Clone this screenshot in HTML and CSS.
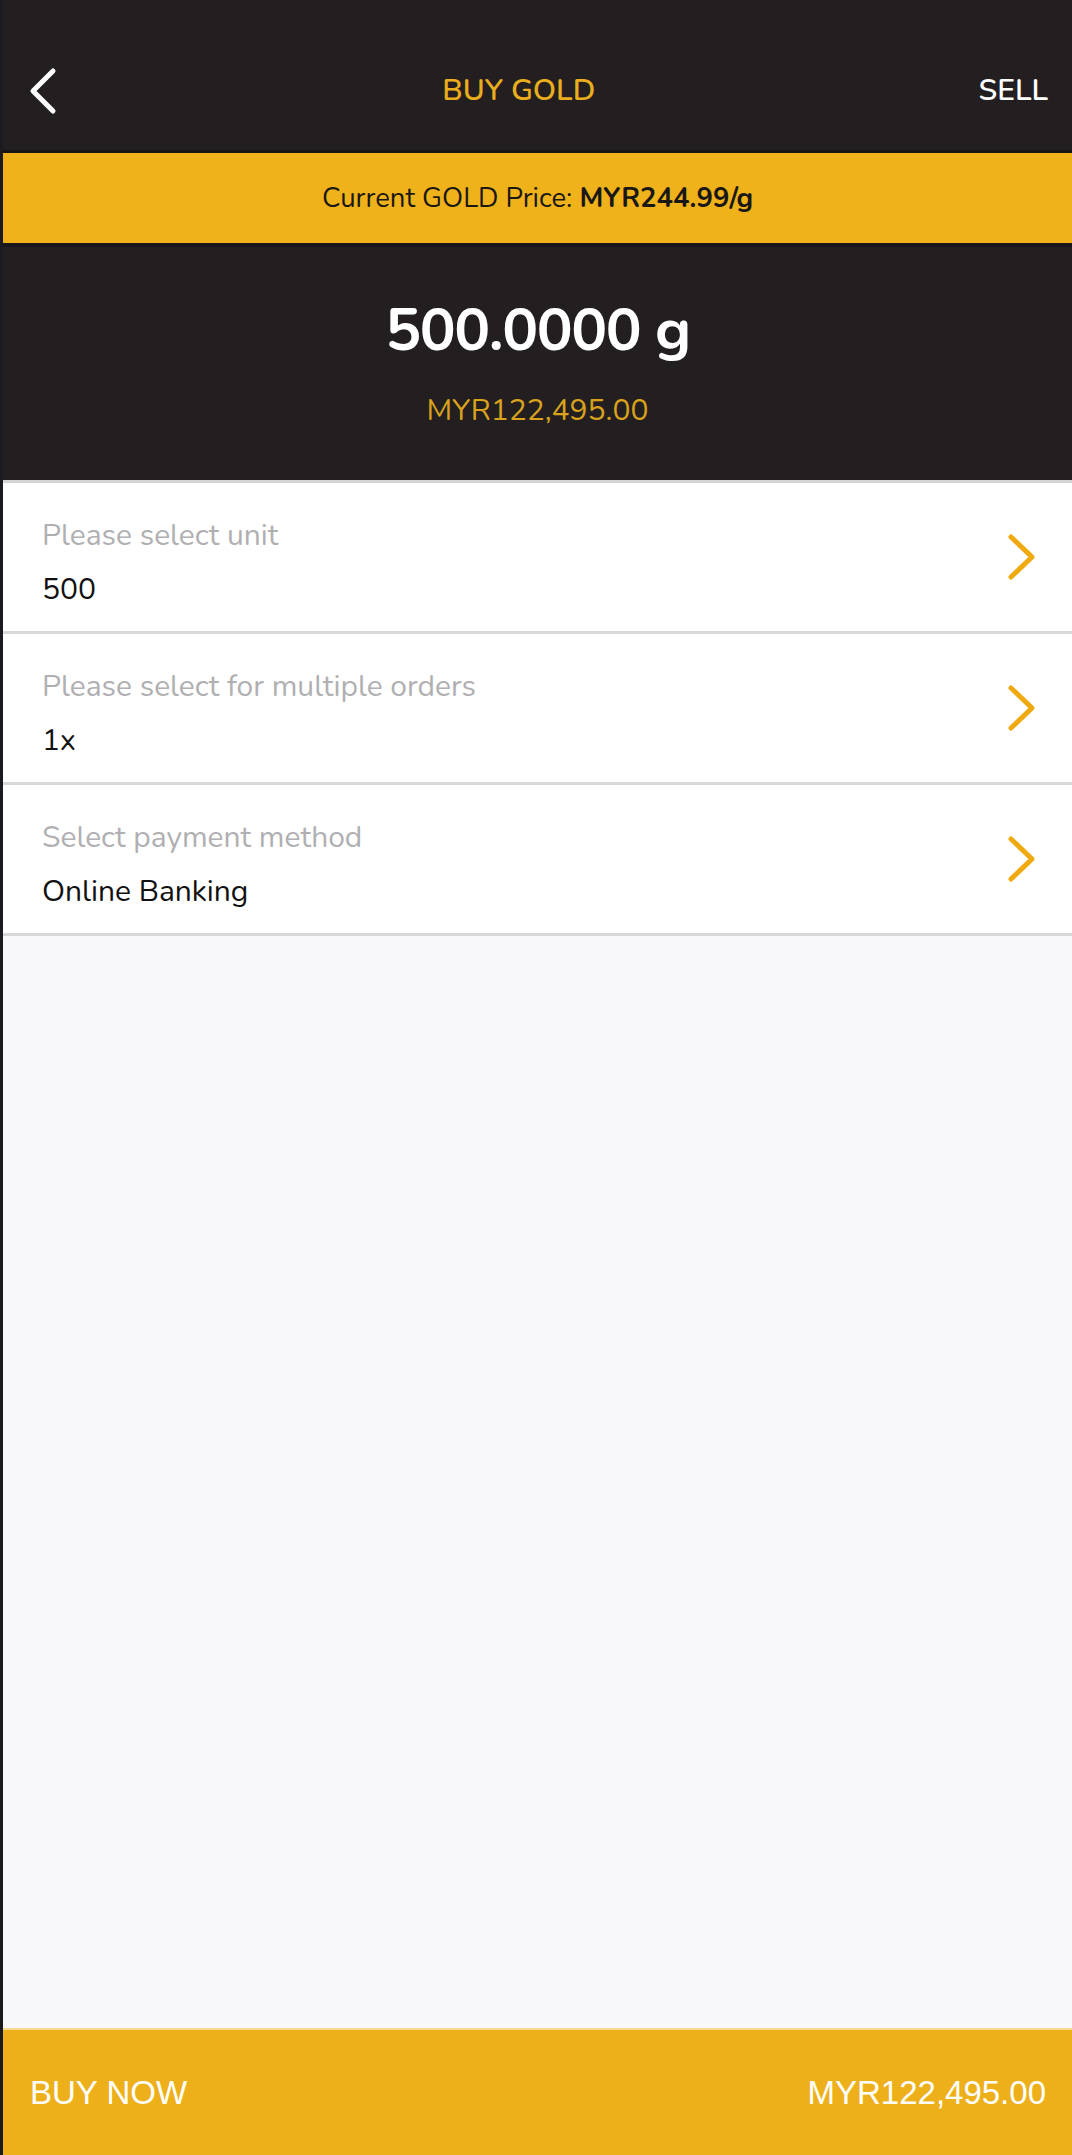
FILE: index.html
```html
<!DOCTYPE html>
<html lang="en">
<head>
<meta charset="utf-8">
<title>Buy Gold</title>
<link rel="stylesheet" href="styles.css">
</head>
<body>
<div class="app">
  <header class="topbar">
    <button class="back" aria-label="Back">
      <svg width="32" height="50" viewBox="0 0 32 50"><polyline points="26,5 6,25 26,45" fill="none" stroke="#ffffff" stroke-width="5" stroke-linecap="round" stroke-linejoin="round"/></svg>
    </button>
    <div class="title">BUY GOLD</div>
    <div class="sell">SELL</div>
  </header>
  <div class="priceband">Current GOLD Price: <b>MYR244.99/g</b></div>
  <section class="amount">
    <div class="grams">500.0000 g</div>
    <div class="myr">MYR122,495.00</div>
  </section>
  <div class="list">
    <div class="row">
      <div class="texts">
        <div class="label">Please select unit</div>
        <div class="value">500</div>
      </div>
      <svg class="chev" width="30" height="48" viewBox="0 0 30 48"><polyline points="4,4 25,24 4,44" fill="none" stroke="#f0a90f" stroke-width="5" stroke-linecap="round" stroke-linejoin="round"/></svg>
    </div>
    <div class="row">
      <div class="texts">
        <div class="label">Please select for multiple orders</div>
        <div class="value">1x</div>
      </div>
      <svg class="chev" width="30" height="48" viewBox="0 0 30 48"><polyline points="4,4 25,24 4,44" fill="none" stroke="#f0a90f" stroke-width="5" stroke-linecap="round" stroke-linejoin="round"/></svg>
    </div>
    <div class="row">
      <div class="texts">
        <div class="label">Select payment method</div>
        <div class="value">Online Banking</div>
      </div>
      <svg class="chev" width="30" height="48" viewBox="0 0 30 48"><polyline points="4,4 25,24 4,44" fill="none" stroke="#f0a90f" stroke-width="5" stroke-linecap="round" stroke-linejoin="round"/></svg>
    </div>
  </div>
  <div class="filler"></div>
  <footer class="buybar">
    <span class="buy">BUY NOW</span>
    <span class="total">MYR122,495.00</span>
  </footer>
</div>
</body>
</html>
```
FILE: styles.css
```css
* { box-sizing: border-box; }
html, body { margin: 0; padding: 0; }
body {
  width: 1072px;
  height: 2155px;
  font-family: "Nunito", "Open Sans", "Noto Sans", sans-serif;
  background: #f8f8fa;
  overflow: hidden;
}
.app {
  display: flex;
  flex-direction: column;
  height: 2155px;
  border-left: 3px solid #1c1a1e;
}
.topbar {
  height: 153px;
  background: #231f20;
  border-bottom: 3px solid #161418;
  display: flex;
  align-items: center;
  padding: 32px 24px 0 24px;
}
.back {
  background: none;
  border: 0;
  padding: 0;
  width: 32px;
  height: 50px;
  display: flex;
  cursor: pointer;
}
.title {
  flex: 1;
  text-align: center;
  color: #e9ad1d;
  font-size: 30px;
  font-weight: 600;
  line-height: 30px;
}
.sell {
  color: #ffffff;
  font-size: 30px;
  font-weight: 600;
  line-height: 30px;
}
.priceband {
  height: 94px;
  background: #efb21b;
  border-bottom: 4px solid #19171b;
  color: #1a1816;
  font-size: 27.5px;
  line-height: 90px;
  text-align: center;
}
.priceband b { font-weight: 700; }
.amount {
  height: 236px;
  background: #231f20;
  border-bottom: 3px solid #d4d4d6;
  padding-top: 53px;
  display: flex;
  flex-direction: column;
  align-items: center;
}
.grams {
  color: #ffffff;
  font-size: 60px;
  font-weight: 700;
  line-height: 60px;
  letter-spacing: -1.5px;
}
.myr {
  margin-top: 36px;
  color: #d9a21d;
  font-size: 30px;
  line-height: 30px;
}
.list { background: #ffffff; }
.row {
  height: 151px;
  border-bottom: 3px solid #d8d8da;
  display: flex;
  align-items: center;
  padding: 0 35px 0 39px;
}
.texts {
  flex: 1;
  display: flex;
  flex-direction: column;
  gap: 24px;
  padding-top: 12px;
}
.label {
  color: #b0b0b2;
  font-size: 30px;
  line-height: 30px;
}
.value {
  color: #111111;
  font-size: 30px;
  line-height: 30px;
}
.chev { flex: none; }
.filler { flex: 1; background: #f8f8fa; }
.buybar {
  height: 127px;
  background: #edb01a;
  border-top: 2px solid #f5d98f;
  display: flex;
  align-items: center;
  justify-content: space-between;
  padding: 0 26px 0 27px;
  color: #ffffff;
  font-family: "Liberation Sans", Arial, sans-serif;
  font-size: 33px;
}
```
